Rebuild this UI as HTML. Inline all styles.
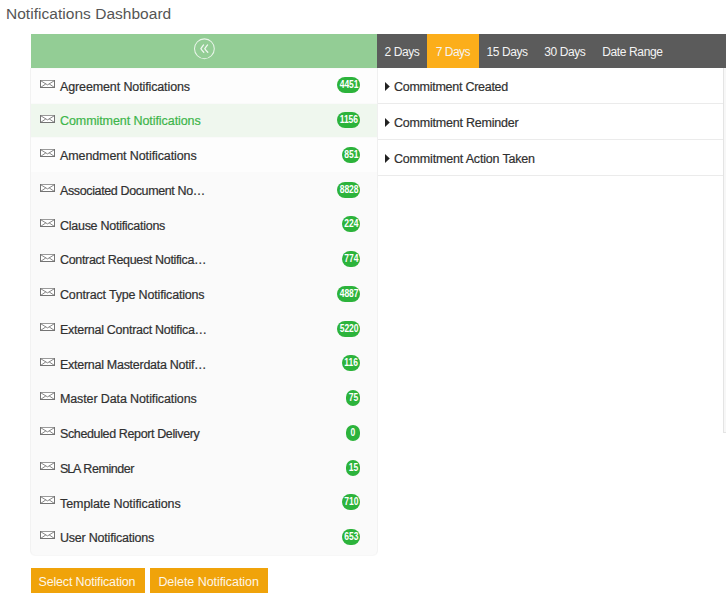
<!DOCTYPE html>
<html><head><meta charset="utf-8"><title>Notifications Dashboard</title>
<style>
html,body{margin:0;padding:0;background:#fff;width:726px;height:600px;overflow:hidden;position:relative;font-family:"Liberation Sans",sans-serif}
.title{position:absolute;left:6px;top:6px;font-size:15.5px;line-height:15.5px;color:#555;letter-spacing:0.03px;white-space:nowrap}
.ghead{position:absolute;left:31px;top:34px;width:346px;height:34px;background:#93cd95}
.dbar{position:absolute;left:377px;top:34px;width:349px;height:34px;background:#5b5b5b}
.otab{position:absolute;left:427px;top:34px;width:52px;height:34px;background:#fcae1a}
.tab{position:absolute;top:46.4px;font-size:12px;line-height:12px;color:#f4f4f4;white-space:nowrap}
.panel{position:absolute;left:30px;top:68px;width:346px;height:487px;background:#fafafa;border-left:1px solid #f2f2f2;border-right:1px solid #f2f2f2;border-radius:0 0 5px 5px;box-shadow:0 1px 1px rgba(0,0,0,0.035)}
.row{position:absolute;left:31px;width:346px;height:33.7px}
.row.sel{background:#eff7ee}
.env{position:absolute;left:40px;width:15px;height:8px}
.lt{position:absolute;left:60px;font-size:12.5px;line-height:13px;white-space:nowrap;-webkit-text-stroke:0.2px currentColor}
.badge{position:absolute;right:366px;height:16px;box-sizing:border-box;padding:0;border-radius:8px/8px;background:#2cb33b;color:#fff;font-weight:bold;font-size:10px;line-height:16px;text-align:center;white-space:nowrap;overflow:visible}
.badge span{display:inline-block;transform:scaleX(0.85)}
.rpanel{position:absolute;left:377px;top:68px;width:346px;height:120px;background:#fff;border-left:1px solid #f0f0f0}
.rline{position:absolute;left:378px;width:345px;height:1px;background:#ebebeb}
.rt{position:absolute;left:394px;font-size:12.5px;line-height:13px;color:#303030;white-space:nowrap;-webkit-text-stroke:0.2px currentColor}
.sbox{position:absolute;left:723px;top:68px;width:3px;height:364px;background:#f7f7f7;border-left:1px solid #e4e4e4;border-bottom:1px solid #e4e4e4}
.btn{position:absolute;top:568px;height:24.5px;background:#f0a30a}
.bt{position:absolute;top:575.5px;font-size:12.5px;line-height:13px;color:#fdf6e8;white-space:nowrap}
</style></head><body>
<div class="title">Notifications Dashboard</div>
<div class="panel"></div>
<div class="ghead"></div>
<svg style="position:absolute;left:193px;top:37px" width="23" height="23" viewBox="0 0 23 23">
<circle cx="11.4" cy="11.75" r="9.9" fill="none" stroke="rgba(255,255,255,0.8)" stroke-width="1.05"/>
<path d="M10.6 7.9 Q8.7 10.4 7.9 11.7 Q8.8 13.2 10.8 15.3 M14.6 7.9 Q12.6 10.4 11.8 11.7 Q12.7 13.2 14.8 15.3" fill="none" stroke="rgba(255,255,255,0.88)" stroke-width="1.25" stroke-linecap="round" stroke-linejoin="round"/>
</svg>
<div class="dbar"></div>
<div class="otab"></div>
<div class="tab" style="left:384.5px;letter-spacing:-0.430px">2 Days</div>
<div class="tab" style="left:435.8px;letter-spacing:-0.530px">7 Days</div>
<div class="tab" style="left:486.6px;letter-spacing:-0.437px">15 Days</div>
<div class="tab" style="left:544.3px;letter-spacing:-0.420px">30 Days</div>
<div class="tab" style="left:602.2px;letter-spacing:-0.363px">Date Range</div>
<div class="row" style="top:68.90px;background:#fdfdfd"></div>
<div class="env" style="top:80px"><svg style="display:block" width="15" height="8" viewBox="0 0 15 8"><rect x="0.5" y="0.5" width="14" height="7" fill="#fff" stroke="#747474" stroke-width="1"/><path d="M1 0.5 H14" stroke="#9a9a9a" stroke-width="1"/><path d="M0.8 0.8 L7.5 4.9 L14.2 0.8 M0.8 7.3 L5.8 3.9 M14.2 7.3 L9.2 3.9" fill="none" stroke="#787878" stroke-width="0.9"/></svg></div>
<div class="lt" style="top:80.60px;letter-spacing:-0.121px;color:#303030">Agreement Notifications</div>
<div class="badge" style="top:77.30px;width:22.70px"><span>4451</span></div>
<div class="row sel" style="top:103.66px"></div>
<div class="env" style="top:115px"><svg style="display:block" width="15" height="8" viewBox="0 0 15 8"><rect x="0.5" y="0.5" width="14" height="7" fill="#fff" stroke="#747474" stroke-width="1"/><path d="M1 0.5 H14" stroke="#9a9a9a" stroke-width="1"/><path d="M0.8 0.8 L7.5 4.9 L14.2 0.8 M0.8 7.3 L5.8 3.9 M14.2 7.3 L9.2 3.9" fill="none" stroke="#787878" stroke-width="0.9"/></svg></div>
<div class="lt" style="top:115.36px;letter-spacing:-0.072px;color:#3db54a">Commitment Notifications</div>
<div class="badge" style="top:112.06px;width:22.70px"><span>1156</span></div>
<div class="row" style="top:138.42px;background:#fdfdfd"></div>
<div class="env" style="top:149px"><svg style="display:block" width="15" height="8" viewBox="0 0 15 8"><rect x="0.5" y="0.5" width="14" height="7" fill="#fff" stroke="#747474" stroke-width="1"/><path d="M1 0.5 H14" stroke="#9a9a9a" stroke-width="1"/><path d="M0.8 0.8 L7.5 4.9 L14.2 0.8 M0.8 7.3 L5.8 3.9 M14.2 7.3 L9.2 3.9" fill="none" stroke="#787878" stroke-width="0.9"/></svg></div>
<div class="lt" style="top:150.12px;letter-spacing:-0.105px;color:#303030">Amendment Notifications</div>
<div class="badge" style="top:146.82px;width:18.25px"><span>851</span></div>
<div class="env" style="top:184px"><svg style="display:block" width="15" height="8" viewBox="0 0 15 8"><rect x="0.5" y="0.5" width="14" height="7" fill="#fff" stroke="#747474" stroke-width="1"/><path d="M1 0.5 H14" stroke="#9a9a9a" stroke-width="1"/><path d="M0.8 0.8 L7.5 4.9 L14.2 0.8 M0.8 7.3 L5.8 3.9 M14.2 7.3 L9.2 3.9" fill="none" stroke="#787878" stroke-width="0.9"/></svg></div>
<div class="lt" style="top:184.88px;letter-spacing:-0.375px;color:#303030">Associated Document No…</div>
<div class="badge" style="top:181.58px;width:22.70px"><span>8828</span></div>
<div class="env" style="top:219px"><svg style="display:block" width="15" height="8" viewBox="0 0 15 8"><rect x="0.5" y="0.5" width="14" height="7" fill="#fff" stroke="#747474" stroke-width="1"/><path d="M1 0.5 H14" stroke="#9a9a9a" stroke-width="1"/><path d="M0.8 0.8 L7.5 4.9 L14.2 0.8 M0.8 7.3 L5.8 3.9 M14.2 7.3 L9.2 3.9" fill="none" stroke="#787878" stroke-width="0.9"/></svg></div>
<div class="lt" style="top:219.64px;letter-spacing:-0.269px;color:#303030">Clause Notifications</div>
<div class="badge" style="top:216.34px;width:18.25px"><span>224</span></div>
<div class="env" style="top:254px"><svg style="display:block" width="15" height="8" viewBox="0 0 15 8"><rect x="0.5" y="0.5" width="14" height="7" fill="#fff" stroke="#747474" stroke-width="1"/><path d="M1 0.5 H14" stroke="#9a9a9a" stroke-width="1"/><path d="M0.8 0.8 L7.5 4.9 L14.2 0.8 M0.8 7.3 L5.8 3.9 M14.2 7.3 L9.2 3.9" fill="none" stroke="#787878" stroke-width="0.9"/></svg></div>
<div class="lt" style="top:254.40px;letter-spacing:-0.333px;color:#303030">Contract Request Notifica…</div>
<div class="badge" style="top:251.10px;width:18.25px"><span>774</span></div>
<div class="env" style="top:288px"><svg style="display:block" width="15" height="8" viewBox="0 0 15 8"><rect x="0.5" y="0.5" width="14" height="7" fill="#fff" stroke="#747474" stroke-width="1"/><path d="M1 0.5 H14" stroke="#9a9a9a" stroke-width="1"/><path d="M0.8 0.8 L7.5 4.9 L14.2 0.8 M0.8 7.3 L5.8 3.9 M14.2 7.3 L9.2 3.9" fill="none" stroke="#787878" stroke-width="0.9"/></svg></div>
<div class="lt" style="top:289.16px;letter-spacing:-0.174px;color:#303030">Contract Type Notifications</div>
<div class="badge" style="top:285.86px;width:22.70px"><span>4887</span></div>
<div class="env" style="top:323px"><svg style="display:block" width="15" height="8" viewBox="0 0 15 8"><rect x="0.5" y="0.5" width="14" height="7" fill="#fff" stroke="#747474" stroke-width="1"/><path d="M1 0.5 H14" stroke="#9a9a9a" stroke-width="1"/><path d="M0.8 0.8 L7.5 4.9 L14.2 0.8 M0.8 7.3 L5.8 3.9 M14.2 7.3 L9.2 3.9" fill="none" stroke="#787878" stroke-width="0.9"/></svg></div>
<div class="lt" style="top:323.92px;letter-spacing:-0.274px;color:#303030">External Contract Notifica…</div>
<div class="badge" style="top:320.62px;width:22.70px"><span>5220</span></div>
<div class="env" style="top:358px"><svg style="display:block" width="15" height="8" viewBox="0 0 15 8"><rect x="0.5" y="0.5" width="14" height="7" fill="#fff" stroke="#747474" stroke-width="1"/><path d="M1 0.5 H14" stroke="#9a9a9a" stroke-width="1"/><path d="M0.8 0.8 L7.5 4.9 L14.2 0.8 M0.8 7.3 L5.8 3.9 M14.2 7.3 L9.2 3.9" fill="none" stroke="#787878" stroke-width="0.9"/></svg></div>
<div class="lt" style="top:358.68px;letter-spacing:-0.277px;color:#303030">External Masterdata Notif…</div>
<div class="badge" style="top:355.38px;width:18.25px"><span>116</span></div>
<div class="env" style="top:392px"><svg style="display:block" width="15" height="8" viewBox="0 0 15 8"><rect x="0.5" y="0.5" width="14" height="7" fill="#fff" stroke="#747474" stroke-width="1"/><path d="M1 0.5 H14" stroke="#9a9a9a" stroke-width="1"/><path d="M0.8 0.8 L7.5 4.9 L14.2 0.8 M0.8 7.3 L5.8 3.9 M14.2 7.3 L9.2 3.9" fill="none" stroke="#787878" stroke-width="0.9"/></svg></div>
<div class="lt" style="top:393.44px;letter-spacing:-0.120px;color:#303030">Master Data Notifications</div>
<div class="badge" style="top:390.14px;width:13.80px"><span>75</span></div>
<div class="env" style="top:427px"><svg style="display:block" width="15" height="8" viewBox="0 0 15 8"><rect x="0.5" y="0.5" width="14" height="7" fill="#fff" stroke="#747474" stroke-width="1"/><path d="M1 0.5 H14" stroke="#9a9a9a" stroke-width="1"/><path d="M0.8 0.8 L7.5 4.9 L14.2 0.8 M0.8 7.3 L5.8 3.9 M14.2 7.3 L9.2 3.9" fill="none" stroke="#787878" stroke-width="0.9"/></svg></div>
<div class="lt" style="top:428.20px;letter-spacing:-0.372px;color:#303030">Scheduled Report Delivery</div>
<div class="badge" style="top:424.90px;width:13.80px"><span>0</span></div>
<div class="env" style="top:462px"><svg style="display:block" width="15" height="8" viewBox="0 0 15 8"><rect x="0.5" y="0.5" width="14" height="7" fill="#fff" stroke="#747474" stroke-width="1"/><path d="M1 0.5 H14" stroke="#9a9a9a" stroke-width="1"/><path d="M0.8 0.8 L7.5 4.9 L14.2 0.8 M0.8 7.3 L5.8 3.9 M14.2 7.3 L9.2 3.9" fill="none" stroke="#787878" stroke-width="0.9"/></svg></div>
<div class="lt" style="top:462.96px;letter-spacing:-0.45px;color:#303030"><span style="letter-spacing:-1.1px">SLA</span> Reminder</div>
<div class="badge" style="top:459.66px;width:13.80px"><span>15</span></div>
<div class="env" style="top:496px"><svg style="display:block" width="15" height="8" viewBox="0 0 15 8"><rect x="0.5" y="0.5" width="14" height="7" fill="#fff" stroke="#747474" stroke-width="1"/><path d="M1 0.5 H14" stroke="#9a9a9a" stroke-width="1"/><path d="M0.8 0.8 L7.5 4.9 L14.2 0.8 M0.8 7.3 L5.8 3.9 M14.2 7.3 L9.2 3.9" fill="none" stroke="#787878" stroke-width="0.9"/></svg></div>
<div class="lt" style="top:497.72px;letter-spacing:-0.073px;color:#303030">Template Notifications</div>
<div class="badge" style="top:494.42px;width:18.25px"><span>710</span></div>
<div class="env" style="top:531px"><svg style="display:block" width="15" height="8" viewBox="0 0 15 8"><rect x="0.5" y="0.5" width="14" height="7" fill="#fff" stroke="#747474" stroke-width="1"/><path d="M1 0.5 H14" stroke="#9a9a9a" stroke-width="1"/><path d="M0.8 0.8 L7.5 4.9 L14.2 0.8 M0.8 7.3 L5.8 3.9 M14.2 7.3 L9.2 3.9" fill="none" stroke="#787878" stroke-width="0.9"/></svg></div>
<div class="lt" style="top:532.48px;letter-spacing:-0.218px;color:#303030">User Notifications</div>
<div class="badge" style="top:529.18px;width:18.25px"><span>653</span></div>
<div class="rpanel"></div>
<div class="rline" style="top:103px"></div>
<svg style="position:absolute;left:385px;top:82px" width="5" height="9" viewBox="0 0 5 9"><path d="M0 0 L4.8 4.5 L0 9 Z" fill="#222"/></svg>
<div class="rt" style="top:80.80px;letter-spacing:-0.267px">Commitment Created</div>
<div class="rline" style="top:139px"></div>
<svg style="position:absolute;left:385px;top:118px" width="5" height="9" viewBox="0 0 5 9"><path d="M0 0 L4.8 4.5 L0 9 Z" fill="#222"/></svg>
<div class="rt" style="top:116.80px;letter-spacing:-0.208px">Commitment Reminder</div>
<div class="rline" style="top:175px"></div>
<svg style="position:absolute;left:385px;top:154px" width="5" height="9" viewBox="0 0 5 9"><path d="M0 0 L4.8 4.5 L0 9 Z" fill="#222"/></svg>
<div class="rt" style="top:152.80px;letter-spacing:-0.179px">Commitment Action Taken</div>
<div class="sbox"></div>
<div class="btn" style="left:31px;width:114px"></div>
<div class="bt" style="left:38.5px;letter-spacing:-0.166px">Select Notification</div>
<div class="btn" style="left:150px;width:118px"></div>
<div class="bt" style="left:158.4px;letter-spacing:-0.049px">Delete Notification</div>
</body></html>
